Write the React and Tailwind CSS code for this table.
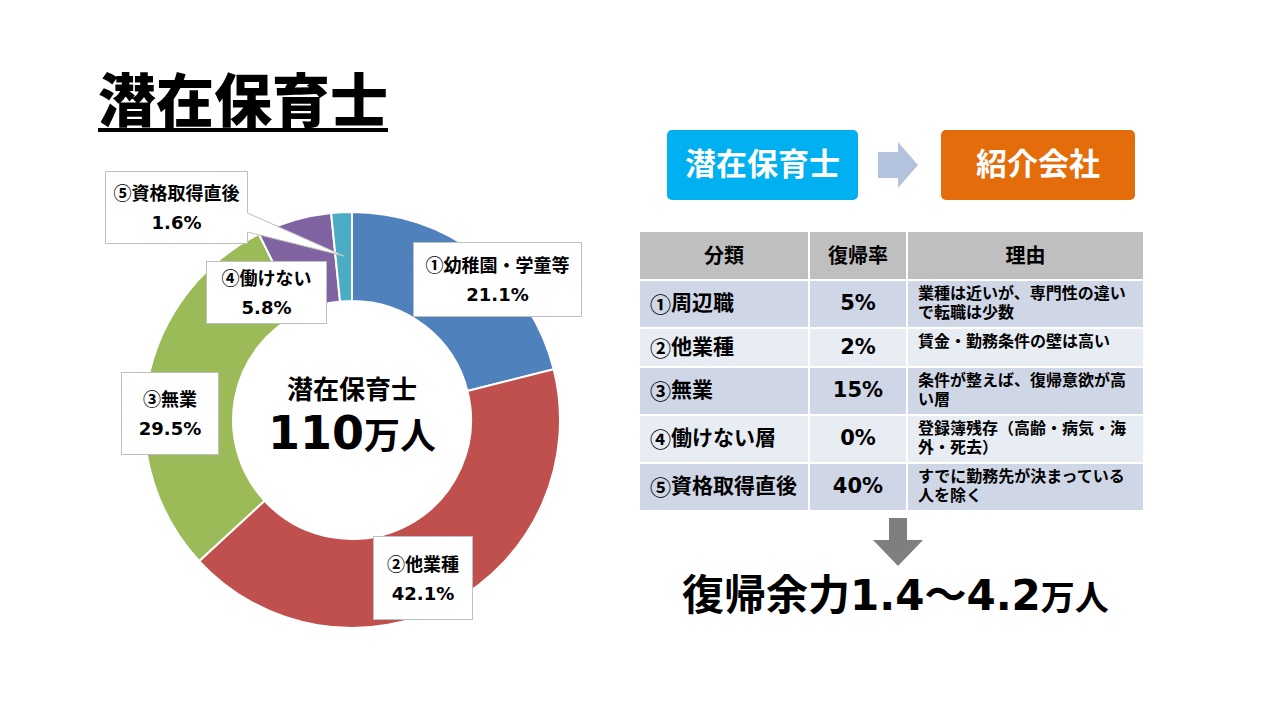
import React from "react";

const CX = 352;
const CY = 260;
const R = 208;
const r = 119;

function pt(rad, deg) {
  const a = (deg * Math.PI) / 180;
  return [CX + rad * Math.sin(a), CY - rad * Math.cos(a)];
}

function arcPath(a0, a1) {
  const large = a1 - a0 > 180 ? 1 : 0;
  const [x0, y0] = pt(R, a0);
  const [x1, y1] = pt(R, a1);
  const [x2, y2] = pt(r, a1);
  const [x3, y3] = pt(r, a0);
  return `M${x0},${y0} A${R},${R} 0 ${large} 1 ${x1},${y1} L${x2},${y2} A${r},${r} 0 ${large} 0 ${x3},${y3} Z`;
}

const segments = [
  { v: 21.1, c: "#4f81bd" },
  { v: 42.1, c: "#c0504d" },
  { v: 29.5, c: "#9bbb59" },
  { v: 5.8, c: "#8064a2" },
  { v: 1.6, c: "#4bacc6" },
];

function Donut() {
  let acc = 0;
  const total = segments.reduce((s, x) => s + x.v, 0);
  return (
    <svg className="absolute inset-0" width="640" height="560" viewBox="0 0 640 560">
      {segments.map((s, i) => {
        const a0 = (acc / total) * 360;
        acc += s.v;
        const a1 = (acc / total) * 360;
        return <path key={i} d={arcPath(a0, a1)} fill={s.c} stroke="#ffffff" strokeWidth="2" />;
      })}
      <path
        d="M105.5,11.5 H247.5 V53 L344,96 L247.5,72 V83.5 H105.5 Z"
        fill="#ffffff"
        stroke="#bfbfbf"
        strokeWidth="1"
      />
    </svg>
  );
}

const font = "font-['DejaVu_Sans','Noto_Sans_CJK_JP',sans-serif]";

function Circ({ text }) {
  const first = text.slice(0, 1);
  const rest = text.slice(1);
  return (
    <>
      <span className="font-['Noto_Sans_CJK_JP',sans-serif]">{first}</span>
      {rest}
    </>
  );
}

function Label({ className, l1, l2, boxed = true }) {
  return (
    <div
      className={`absolute flex flex-col items-center justify-center text-[18px] leading-[29px] font-bold text-black ${
        boxed ? "bg-white border border-[#bfbfbf]" : ""
      } ${className}`}
    >
      <div className="whitespace-nowrap">
        <Circ text={l1} />
      </div>
      <div className="whitespace-nowrap">{l2}</div>
    </div>
  );
}

const rows = [
  { name: "①周辺職", rate: "5%", reason: "業種は近いが、専門性の違いで転職は少数", bg: "bg-[#cfd6e6]", h: "h-[46px]" },
  { name: "②他業種", rate: "2%", reason: "賃金・勤務条件の壁は高い", bg: "bg-[#e8ecf3]", h: "h-[37px]" },
  { name: "③無業", rate: "15%", reason: "条件が整えば、復帰意欲が高い層", bg: "bg-[#cfd6e6]", h: "h-[46px]" },
  { name: "④働けない層", rate: "0%", reason: "登録簿残存（高齢・病気・海外・死去）", bg: "bg-[#e8ecf3]", h: "h-[46px]" },
  { name: "⑤資格取得直後", rate: "40%", reason: "すでに勤務先が決まっている人を除く", bg: "bg-[#cfd6e6]", h: "h-[46px]" },
];

export default function App() {
  return (
    <div className={`w-[1280px] h-[720px] bg-white flex text-black overflow-hidden ${font}`}>
      {/* Left column */}
      <div className="w-[640px] flex flex-col">
        <div className="h-[160px] pl-[98px] pt-[67px]">
          <span className="inline-block font-['Noto_Sans_CJK_JP',sans-serif] font-black text-[58px] leading-[60px] border-b-[4px] border-black pb-[1px]">
            潜在保育士
          </span>
        </div>
        <div className="relative w-[640px] h-[560px]">
          <Donut />
          <Label className="left-[105px] top-[11px] w-[143px] h-[72px]" l1="⑤資格取得直後" l2="1.6%" boxed={false} />
          <Label className="left-[206px] top-[101px] w-[121px] h-[63px]" l1="④働けない" l2="5.8%" />
          <Label className="left-[413px] top-[82px] w-[169px] h-[75px]" l1="①幼稚園・学童等" l2="21.1%" />
          <Label className="left-[121px] top-[212px] w-[98px] h-[83px]" l1="③無業" l2="29.5%" />
          <Label className="left-[373px] top-[376px] w-[100px] h-[84px]" l1="②他業種" l2="42.1%" />
          <div className="absolute left-[232px] top-[212px] w-[240px] flex flex-col items-center font-bold">
            <div className="text-[26px] leading-[36px]">潜在保育士</div>
            <div className="flex items-baseline leading-[50px]">
              <span className="text-[46px]">110</span>
              <span className="text-[36px]">万人</span>
            </div>
          </div>
        </div>
      </div>

      {/* Right column */}
      <div className="w-[503px] flex flex-col pt-[130px]">
        <div className="flex items-center h-[70px]">
          <div className="ml-[27px] w-[191px] h-[70px] rounded-[5px] bg-[#00b0f0] flex items-center justify-center pb-[6px]">
            <span className="text-white font-bold text-[31px] font-['Noto_Sans_CJK_JP',sans-serif]">潜在保育士</span>
          </div>
          <svg className="ml-[20px]" width="40" height="46" viewBox="0 0 40 46">
            <path d="M0,10 H20 V0 L40,23 L20,46 V36 H0 Z" fill="#b4c3dd" />
          </svg>
          <div className="ml-[23px] w-[194px] h-[70px] rounded-[5px] bg-[#e46c0a] flex items-center justify-center pb-[6px]">
            <span className="text-white font-bold text-[31px] font-['Noto_Sans_CJK_JP',sans-serif]">紹介会社</span>
          </div>
        </div>

        <div className="mt-[32px] grid grid-cols-[168px_96px_235px] gap-x-[2px] gap-y-[2px]">
          <div className="h-[47px] bg-[#bfbfbf] flex items-center justify-center text-[20px] font-bold">分類</div>
          <div className="h-[47px] bg-[#bfbfbf] flex items-center justify-center text-[20px] font-bold">復帰率</div>
          <div className="h-[47px] bg-[#bfbfbf] flex items-center justify-center text-[20px] font-bold">理由</div>
          {rows.map((row, i) => (
            <React.Fragment key={i}>
              <div className={`${row.h} ${row.bg} flex items-center pl-[10px] text-[21px] font-bold whitespace-nowrap`}>
                <Circ text={row.name} />
              </div>
              <div className={`${row.h} ${row.bg} flex items-center justify-center text-[21px] font-bold`}>
                {row.rate}
              </div>
              <div className={`${row.h} ${row.bg} pl-[10px] pr-[8px] pt-[3px] text-[16px] leading-[19px] font-bold`}>
                {row.reason}
              </div>
            </React.Fragment>
          ))}
        </div>

        <svg className="mt-[8px] ml-[233px]" width="50" height="48" viewBox="0 0 50 48">
          <path d="M16,0 H34 V22 H50 L25,48 L0,22 H16 Z" fill="#7f7f7f" />
        </svg>

        <div className="mt-[5px] pl-[42px] flex items-baseline font-bold leading-[50px] whitespace-nowrap">
          <span className="text-[42px]">復帰余力1.4～4.2</span>
          <span className="text-[34px]">万人</span>
        </div>
      </div>
    </div>
  );
}
